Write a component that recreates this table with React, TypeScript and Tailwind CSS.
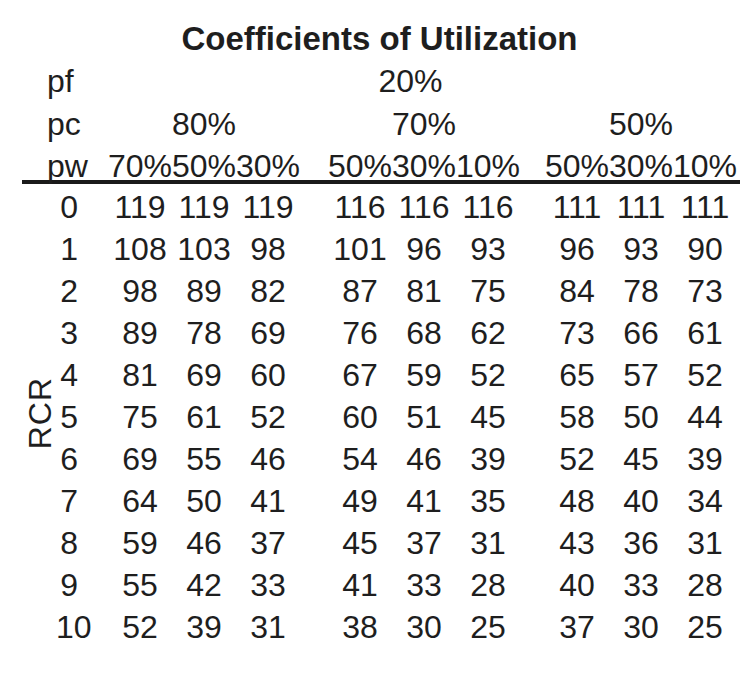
const groups = [
  { pc: "80%", pw: ["70%", "50%", "30%"] },
  { pc: "70%", pw: ["50%", "30%", "10%"] },
  { pc: "50%", pw: ["50%", "30%", "10%"] },
];

const rows: number[][] = [
  [119, 119, 119, 116, 116, 116, 111, 111, 111],
  [108, 103, 98, 101, 96, 93, 96, 93, 90],
  [98, 89, 82, 87, 81, 75, 84, 78, 73],
  [89, 78, 69, 76, 68, 62, 73, 66, 61],
  [81, 69, 60, 67, 59, 52, 65, 57, 52],
  [75, 61, 52, 60, 51, 45, 58, 50, 44],
  [69, 55, 46, 54, 46, 39, 52, 45, 39],
  [64, 50, 41, 49, 41, 35, 48, 40, 34],
  [59, 46, 37, 45, 37, 31, 43, 36, 31],
  [55, 42, 33, 41, 33, 28, 40, 33, 28],
  [52, 39, 31, 38, 30, 25, 37, 30, 25],
];

const gridCols =
  "grid grid-cols-[56px_52px_64px_64px_64px_28px_64px_64px_64px_25px_64px_64px_64px]";

// data columns sit in grid columns 3-5, 7-9, 11-13
const colStart = [
  "col-start-3", "col-start-4", "col-start-5",
  "col-start-7", "col-start-8", "col-start-9",
  "col-start-11", "col-start-12", "col-start-13",
];
const rowStart = [
  "row-start-1", "row-start-2", "row-start-3", "row-start-4", "row-start-5", "row-start-6",
  "row-start-7", "row-start-8", "row-start-9", "row-start-10", "row-start-11",
];
const groupSpan = ["col-start-3 col-span-3", "col-start-7 col-span-3", "col-start-11 col-span-3"];

export default function App() {
  return (
    <div className="w-[751px] h-[686px] bg-white text-[#1e1e1e] font-['Liberation_Sans',Arial,sans-serif] overflow-hidden">
      <h1 className="mt-[21px] h-[36px] leading-[36px] text-center pl-[8px] text-[33px] font-bold">
        Coefficients of Utilization
      </h1>

      <div className={`${gridCols} text-[32px] leading-[42px] mt-[3px]`}>
        <div className="col-span-2 pl-[47px] h-[43px]">pf</div>
        <div className="col-start-3 col-span-11 text-center pr-[24px] h-[43px]">20%</div>

        <div className="col-span-2 pl-[47px] h-[42px]">pc</div>
        {groups.map((g, i) => (
          <div key={g.pc + i} className={`${groupSpan[i]} text-center h-[42px]`}>
            {g.pc}
          </div>
        ))}

        <div className="col-span-2 pl-[47px] h-[35px]">pw</div>
        {groups.flatMap((g, i) =>
          g.pw.map((v, j) => (
            <div key={`${i}-${j}`} className={`${colStart[i * 3 + j]} text-center h-[35px]`}>
              {v}
            </div>
          )),
        )}
      </div>

      <div className="ml-[22px] w-[718px] h-[4px] bg-[#1a1a1a]" />

      <div className={`${gridCols} grid-rows-[repeat(11,42px)] text-[32px] leading-[42px] mt-[2px]`}>
        <div className="col-start-1 row-start-1 row-span-11 flex items-center pl-[25px] pb-[7px]">
          <span className="[writing-mode:vertical-rl] rotate-180 text-[32px] leading-[30px] tracking-[1px]">
            RCR
          </span>
        </div>
        {rows.map((r, ri) => (
          <div key={`l${ri}`} className={`col-start-2 ${rowStart[ri]} text-right pr-[30px]`}>
            {ri}
          </div>
        ))}
        {rows.flatMap((r, ri) =>
          r.map((v, ci) => (
            <div key={`${ri}-${ci}`} className={`${colStart[ci]} ${rowStart[ri]} text-center`}>
              {v}
            </div>
          )),
        )}
      </div>
    </div>
  );
}
